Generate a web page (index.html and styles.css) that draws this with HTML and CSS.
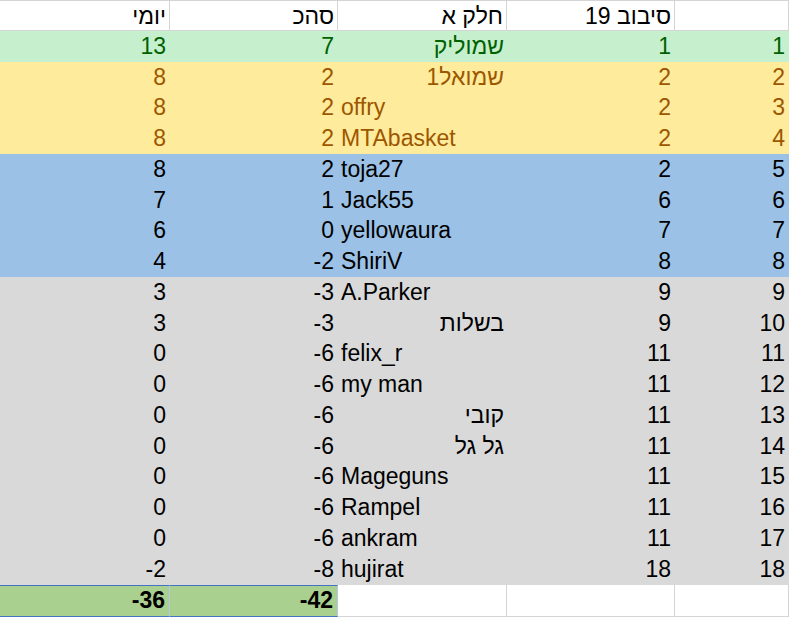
FILE: index.html
```html
<!DOCTYPE html>
<html lang="he">
<head>
<meta charset="utf-8">
<link rel="stylesheet" href="styles.css">
</head>
<body>
<div class="sheet" dir="rtl">
  <div class="row head">
    <div class="c"></div>
    <div class="c">סיבוב 19</div>
    <div class="c">חלק א</div>
    <div class="c">סהכ</div>
    <div class="c">יומי</div>
  </div>

  <div class="row good">
    <div class="c n">1</div><div class="c n">1</div><div class="c">שמוליק</div><div class="c n">7</div><div class="c n">13</div>
  </div>
  <div class="row neutral">
    <div class="c n">2</div><div class="c n">2</div><div class="c">שמואל1</div><div class="c n">2</div><div class="c n">8</div>
  </div>
  <div class="row neutral">
    <div class="c n">3</div><div class="c n">2</div><div class="c l">offry</div><div class="c n">2</div><div class="c n">8</div>
  </div>
  <div class="row neutral">
    <div class="c n">4</div><div class="c n">2</div><div class="c l">MTAbasket</div><div class="c n">2</div><div class="c n">8</div>
  </div>
  <div class="row blue">
    <div class="c n">5</div><div class="c n">2</div><div class="c l">toja27</div><div class="c n">2</div><div class="c n">8</div>
  </div>
  <div class="row blue">
    <div class="c n">6</div><div class="c n">6</div><div class="c l">Jack55</div><div class="c n">1</div><div class="c n">7</div>
  </div>
  <div class="row blue">
    <div class="c n">7</div><div class="c n">7</div><div class="c l">yellowaura</div><div class="c n">0</div><div class="c n">6</div>
  </div>
  <div class="row blue">
    <div class="c n">8</div><div class="c n">8</div><div class="c l">ShiriV</div><div class="c n">-2</div><div class="c n">4</div>
  </div>
  <div class="row gray">
    <div class="c n">9</div><div class="c n">9</div><div class="c l">A.Parker</div><div class="c n">-3</div><div class="c n">3</div>
  </div>
  <div class="row gray">
    <div class="c n">10</div><div class="c n">9</div><div class="c">בשלות</div><div class="c n">-3</div><div class="c n">3</div>
  </div>
  <div class="row gray">
    <div class="c n">11</div><div class="c n">11</div><div class="c l">felix_r</div><div class="c n">-6</div><div class="c n">0</div>
  </div>
  <div class="row gray">
    <div class="c n">12</div><div class="c n">11</div><div class="c l">my man</div><div class="c n">-6</div><div class="c n">0</div>
  </div>
  <div class="row gray">
    <div class="c n">13</div><div class="c n">11</div><div class="c">קובי</div><div class="c n">-6</div><div class="c n">0</div>
  </div>
  <div class="row gray">
    <div class="c n">14</div><div class="c n">11</div><div class="c">גל גל</div><div class="c n">-6</div><div class="c n">0</div>
  </div>
  <div class="row gray">
    <div class="c n">15</div><div class="c n">11</div><div class="c l">Mageguns</div><div class="c n">-6</div><div class="c n">0</div>
  </div>
  <div class="row gray">
    <div class="c n">16</div><div class="c n">11</div><div class="c l">Rampel</div><div class="c n">-6</div><div class="c n">0</div>
  </div>
  <div class="row gray">
    <div class="c n">17</div><div class="c n">11</div><div class="c l">ankram</div><div class="c n">-6</div><div class="c n">0</div>
  </div>
  <div class="row gray">
    <div class="c n">18</div><div class="c n">18</div><div class="c l">hujirat</div><div class="c n">-8</div><div class="c n">-2</div>
  </div>

  <div class="row total">
    <div class="c blank"></div>
    <div class="c blank"></div>
    <div class="c blank"></div>
    <div class="c n sum">-42</div>
    <div class="c n sum first">-36</div>
  </div>
</div>
</body>
</html>
```

FILE: styles.css
```css
html, body {
  margin: 0;
  padding: 0;
  background: #ffffff;
}

.sheet {
  width: 789px;
  font-family: "Liberation Sans", Arial, sans-serif;
  font-size: 23px;
  color: #000000;
}

.row {
  display: grid;
  grid-template-columns: 114px 168px 169px 168px 170px;
  height: 30.75px;
}

.c {
  box-sizing: border-box;
  display: flex;
  align-items: center;
  justify-content: flex-start;
  padding: 0 3px 0 3px;
  white-space: nowrap;
  overflow: hidden;
  line-height: 1;
}

.c.n {
  direction: ltr;
  justify-content: flex-end;
  padding-right: 4px;
}

.c.l {
  direction: ltr;
  justify-content: flex-start;
}

.head {
  height: 31px;
}

.head .c {
  border-top: 1px solid #d5d5d5;
  border-bottom: 1px solid #d5d5d5;
  border-right: 1px solid #d5d5d5;
  padding-top: 1px;
}

.good {
  background: #c6efce;
  color: #006100;
}

.neutral {
  background: #ffeb9c;
  color: #9c5700;
}

.blue {
  background: #9bc2e6;
}

.gray {
  background: #d9d9d9;
}

.total {
  height: 32px;
}

.total .blank {
  background: #ffffff;
  border-right: 1px solid #d5d5d5;
  border-bottom: 1px solid #d5d5d5;
}

.total .sum {
  background: #a9d08e;
  font-weight: bold;
  border-top: 1px solid #4472c4;
  border-bottom: 1px solid #4472c4;
  border-right: 1px solid #b4c6e7;
}
```
